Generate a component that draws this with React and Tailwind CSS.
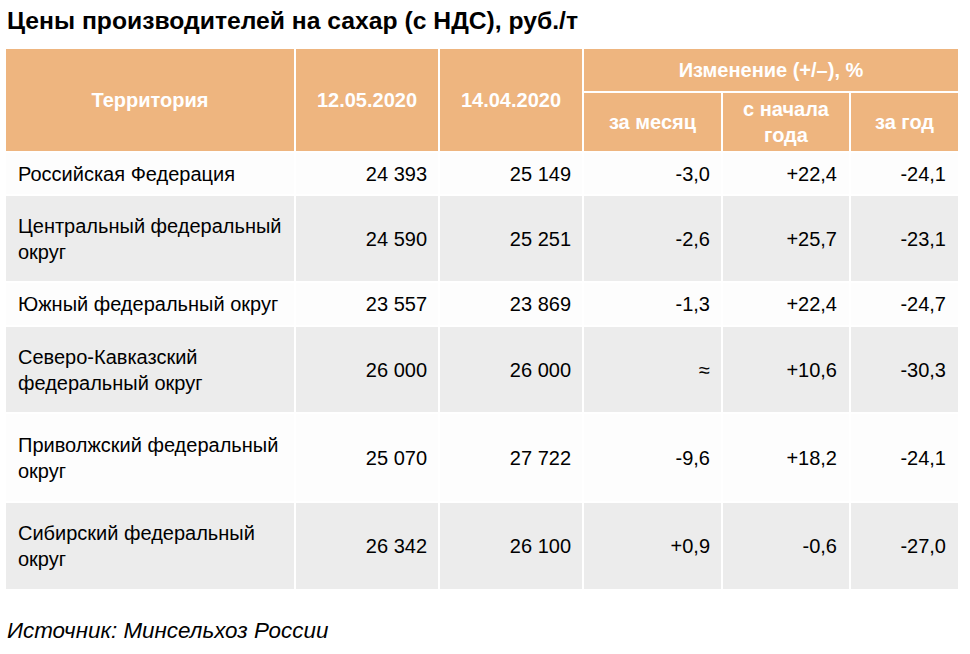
import React from 'react'

const rows = [
    { name: "Российская Федерация", a: "24 393", b: "25 149", m: "-3,0", y0: "+22,4", y: "-24,1", gray: false },
    { name: "Центральный федеральный округ", a: "24 590", b: "25 251", m: "-2,6", y0: "+25,7", y: "-23,1", gray: true },
    { name: "Южный федеральный округ", a: "23 557", b: "23 869", m: "-1,3", y0: "+22,4", y: "-24,7", gray: false },
    { name: "Северо-Кавказский федеральный округ", a: "26 000", b: "26 000", m: "≈", y0: "+10,6", y: "-30,3", gray: true },
    { name: "Приволжский федеральный округ", a: "25 070", b: "27 722", m: "-9,6", y0: "+18,2", y: "-24,1", gray: false },
    { name: "Сибирский федеральный округ", a: "26 342", b: "26 100", m: "+0,9", y0: "-0,6", y: "-27,0", gray: true },
]

const App = () => {
    return (
        <div className="w-[970px] h-[654px] bg-white text-black" style={{ fontFamily: '"Liberation Sans", Arial, sans-serif' }}>
            <h1 className="pl-[7px] pt-[5px] text-[24.7px] leading-[32px] font-bold">
                Цены производителей на сахар (с НДС), руб./т
            </h1>

            <div className="mt-[12px] ml-[6px] grid gap-[2px] grid-cols-[288px_142px_142px_137px_126px_107px] grid-rows-[42px_58px_41px_85px_42px_85px_87px_86px] text-[20px] leading-[26px]">
                {/* header */}
                <div className="row-span-2 bg-[#eeb57f] text-white font-bold flex items-center justify-center">Территория</div>
                <div className="row-span-2 bg-[#eeb57f] text-white font-bold flex items-center justify-center">12.05.2020</div>
                <div className="row-span-2 bg-[#eeb57f] text-white font-bold flex items-center justify-center">14.04.2020</div>
                <div className="col-span-3 bg-[#eeb57f] text-white font-bold flex items-center justify-center">Изменение (+/–), %</div>
                <div className="bg-[#eeb57f] text-white font-bold flex items-center justify-center">за месяц</div>
                <div className="bg-[#eeb57f] text-white font-bold flex items-center justify-center text-center">с начала<br />года</div>
                <div className="bg-[#eeb57f] text-white font-bold flex items-center justify-center">за год</div>

                {rows.map((r, i) => {
                    const bg = r.gray ? "bg-[#ececec]" : "bg-[#fdfdfd]"
                    return (
                        <React.Fragment key={i}>
                            <div className={`${bg} flex items-center pl-[12px] pr-[4px]`}>{r.name}</div>
                            <div className={`${bg} flex items-center justify-end pr-[11px]`}>{r.a}</div>
                            <div className={`${bg} flex items-center justify-end pr-[11px]`}>{r.b}</div>
                            <div className={`${bg} flex items-center justify-end pr-[11px]`}>{r.m}</div>
                            <div className={`${bg} flex items-center justify-end pr-[12px]`}>{r.y0}</div>
                            <div className={`${bg} flex items-center justify-end pr-[12px]`}>{r.y}</div>
                        </React.Fragment>
                    )
                })}
            </div>

            <p className="mt-[29px] ml-[7px] text-[22.4px] leading-[26px] italic">Источник: Минсельхоз России</p>
        </div>
    )
}

export default App
